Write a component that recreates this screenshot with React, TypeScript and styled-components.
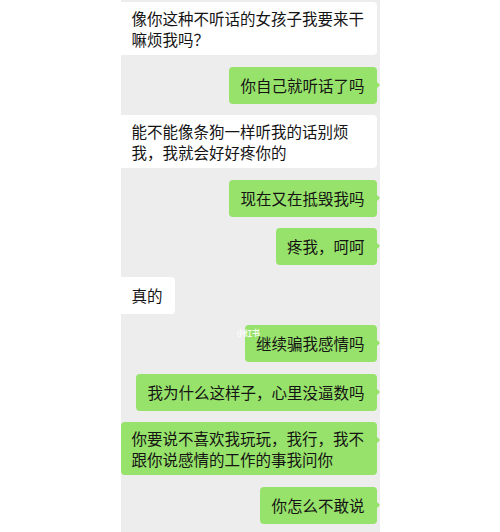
import React from 'react'
import styled, { createGlobalStyle } from 'styled-components'

type Side = 'left' | 'right'

interface Message {
  side: Side
  text: string
}

const messages: Message[] = [
  { side: 'left', text: '像你这种不听话的女孩子我要来干嘛烦我吗？' },
  { side: 'right', text: '你自己就听话了吗' },
  { side: 'left', text: '能不能像条狗一样听我的话别烦我，我就会好好疼你的' },
  { side: 'right', text: '现在又在抵毁我吗' },
  { side: 'right', text: '疼我，呵呵' },
  { side: 'left', text: '真的' },
  { side: 'right', text: '继续骗我感情吗' },
  { side: 'right', text: '我为什么这样子，心里没逼数吗' },
  { side: 'right', text: '你要说不喜欢我玩玩，我行，我不跟你说感情的工作的事我问你' },
  { side: 'right', text: '你怎么不敢说' },
]

const GlobalStyle = createGlobalStyle`
  html, body {
    margin: 0;
    padding: 0;
    background: #ffffff;
    overflow: hidden;
  }
  body {
    font-family: "Noto Sans CJK SC", "Noto Sans", sans-serif;
  }
`

const Panel = styled.div`
  position: relative;
  width: 259px;
  min-height: 532px;
  margin: 0 auto;
  padding: 2px 3px 0 0;
  box-sizing: border-box;
  background: #ededed;
  display: flex;
  flex-direction: column;
  gap: 11.5px;
`

const Row = styled.div<{ side: Side }>`
  display: flex;
  justify-content: ${(p) => (p.side === 'right' ? 'flex-end' : 'flex-start')};
`

const Bubble = styled.div<{ side: Side }>`
  position: relative;
  box-sizing: border-box;
  max-width: 100%;
  min-height: 37px;
  padding: 6px 12px 6px 11px;
  display: flex;
  align-items: center;
  font-size: 15.5px;
  line-height: 20.5px;
  color: #141414;
  background: ${(p) => (p.side === 'right' ? '#97e26a' : '#ffffff')};
  border-radius: ${(p) => (p.side === 'right' ? '4px' : '0 4px 4px 0')};
  word-break: break-all;

  ${(p) =>
    p.side === 'right'
      ? `
  &::after {
    content: '';
    position: absolute;
    top: 14px;
    right: -3.5px;
    border-left: 4px solid #97e26a;
    border-top: 4px solid transparent;
    border-bottom: 4px solid transparent;
  }`
      : ''}
`

const Watermark = styled.span`
  position: absolute;
  left: 116px;
  top: 327px;
  font-size: 8px;
  font-weight: 700;
  color: rgba(255, 255, 255, 0.9);
  letter-spacing: -0.3px;
`

const App: React.FC = () => (
  <>
    <GlobalStyle />
    <Panel>
      {messages.map((m, i) => (
        <Row key={i} side={m.side}>
          <Bubble side={m.side}>{m.text}</Bubble>
        </Row>
      ))}
      <Watermark>小红书</Watermark>
    </Panel>
  </>
)

export default App
